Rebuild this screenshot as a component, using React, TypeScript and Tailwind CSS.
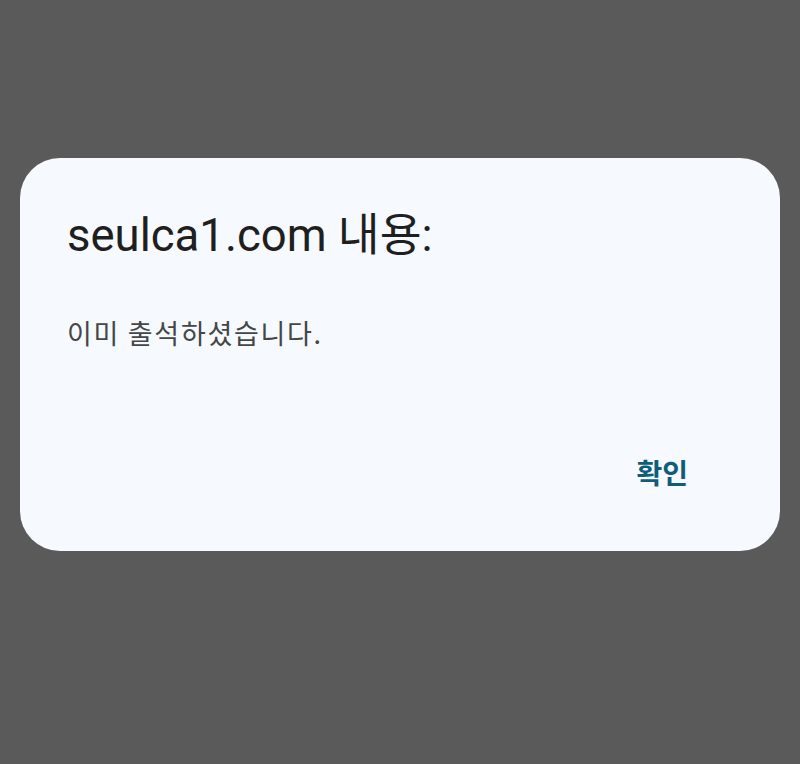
export default function App() {
  return (
    <div className="w-[800px] h-[764px] bg-[#5a5a5a] pt-[158px] px-[20px] font-['Roboto','Noto_Sans_CJK_KR',sans-serif]">
      <div className="bg-[#f6f9fe] rounded-[40px] h-[393px] flex flex-col pl-[47px] pr-[92px] pt-[52px]">
        <div className="text-[45.5px] leading-[52px] text-[#1f1f1f]">
          seulca1.com 내용:
        </div>
        <div className="mt-[53px] text-[27px] leading-[36px] tracking-[1.7px] text-[#444746] font-['Noto_Sans_CJK_KR',sans-serif]">
          이미 출석하셨습니다.
        </div>
        <div className="flex justify-end mt-[103px]">
          <span className="text-[28px] leading-[36px] font-bold text-[#0e5d79] font-['Noto_Sans_CJK_KR',sans-serif]">
            확인
          </span>
        </div>
      </div>
    </div>
  );
}
